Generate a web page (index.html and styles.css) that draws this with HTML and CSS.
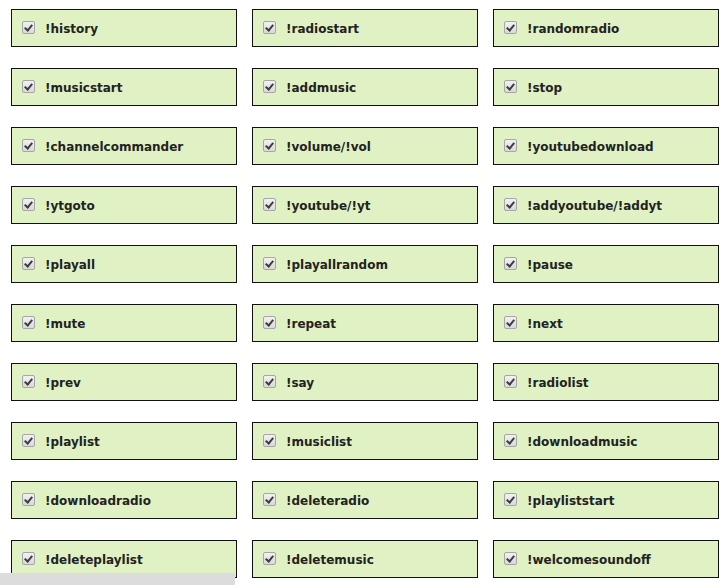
FILE: index.html
```html
<!DOCTYPE html>
<html>
<head>
<meta charset="utf-8">
<link rel="stylesheet" href="styles.css">
</head>
<body>
<div class="grid">
  <label class="cmd"><span class="cb"></span>!history</label>
  <label class="cmd"><span class="cb"></span>!radiostart</label>
  <label class="cmd"><span class="cb"></span>!randomradio</label>
  <label class="cmd"><span class="cb"></span>!musicstart</label>
  <label class="cmd"><span class="cb"></span>!addmusic</label>
  <label class="cmd"><span class="cb"></span>!stop</label>
  <label class="cmd"><span class="cb"></span>!channelcommander</label>
  <label class="cmd"><span class="cb"></span>!volume/!vol</label>
  <label class="cmd"><span class="cb"></span>!youtubedownload</label>
  <label class="cmd"><span class="cb"></span>!ytgoto</label>
  <label class="cmd"><span class="cb"></span>!youtube/!yt</label>
  <label class="cmd"><span class="cb"></span>!addyoutube/!addyt</label>
  <label class="cmd"><span class="cb"></span>!playall</label>
  <label class="cmd"><span class="cb"></span>!playallrandom</label>
  <label class="cmd"><span class="cb"></span>!pause</label>
  <label class="cmd"><span class="cb"></span>!mute</label>
  <label class="cmd"><span class="cb"></span>!repeat</label>
  <label class="cmd"><span class="cb"></span>!next</label>
  <label class="cmd"><span class="cb"></span>!prev</label>
  <label class="cmd"><span class="cb"></span>!say</label>
  <label class="cmd"><span class="cb"></span>!radiolist</label>
  <label class="cmd"><span class="cb"></span>!playlist</label>
  <label class="cmd"><span class="cb"></span>!musiclist</label>
  <label class="cmd"><span class="cb"></span>!downloadmusic</label>
  <label class="cmd"><span class="cb"></span>!downloadradio</label>
  <label class="cmd"><span class="cb"></span>!deleteradio</label>
  <label class="cmd"><span class="cb"></span>!playliststart</label>
  <label class="cmd"><span class="cb"></span>!deleteplaylist</label>
  <label class="cmd"><span class="cb"></span>!deletemusic</label>
  <label class="cmd"><span class="cb"></span>!welcomesoundoff</label>
</div>
<div class="hbar"></div>
</body>
</html>
```
FILE: styles.css
```css
html, body {
  margin: 0;
  padding: 0;
  background: #ffffff;
  overflow: hidden;
}
.grid {
  display: grid;
  grid-template-columns: 226px 226px 226px;
  column-gap: 15px;
  row-gap: 21px;
  padding: 9px 0 0 11px;
}
.cmd {
  box-sizing: border-box;
  height: 38px;
  border: 1px solid #111;
  background: #e0f1c3;
  display: flex;
  align-items: center;
  padding-left: 10px;
  padding-top: 2px;
  font-family: "DejaVu Sans", Verdana, sans-serif;
  font-weight: bold;
  font-size: 12px;
  color: #222222;
}
.cb {
  position: relative;
  box-sizing: border-box;
  width: 13px;
  height: 13px;
  margin-right: 10px;
  margin-top: -3px;
  border: 1px solid #a6a6a6;
  border-radius: 2px;
  background: linear-gradient(#f2f2f2, #d9d9d9);
}
.cb::after {
  content: "";
  position: absolute;
  left: 3px;
  top: 1px;
  width: 3px;
  height: 6px;
  border: solid #3d3d3d;
  border-width: 0 2px 2px 0;
  transform: rotate(40deg);
}
.hbar {
  position: fixed;
  left: 0;
  bottom: 0;
  width: 235px;
  height: 12px;
  background: #dcdcdc;
}
```
